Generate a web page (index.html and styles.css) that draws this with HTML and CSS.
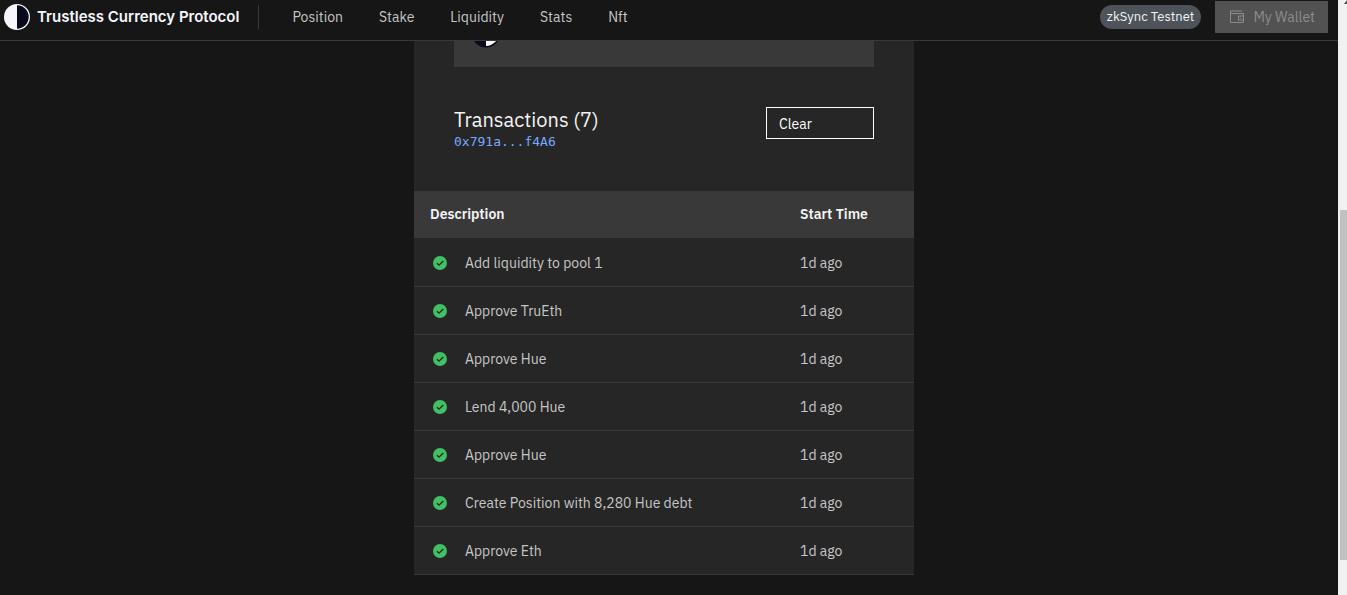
FILE: index.html
```
<!DOCTYPE html>
<html lang="en">
<head>
<meta charset="utf-8">
<title>Trustless Currency Protocol</title>
<link rel="stylesheet" href="styles.css">
</head>
<body>
<svg class="defs" aria-hidden="true">
  <symbol id="check" viewBox="0 0 16 16">
    <circle cx="8" cy="8" r="7" fill="#42be65"/>
    <path d="M4.9 8.2 7 10.2l4.2-4.2" fill="none" stroke="#262626" stroke-width="1.3"/>
  </symbol>
</svg>
<div class="app">
  <header class="header">
    <a class="brand" href="#">
      <svg class="brand-mark" viewBox="0 0 26 26" aria-hidden="true">
        <circle cx="13" cy="13" r="13" fill="#f5f6fc"/>
        <path d="M13 1.3a11.7 11.7 0 0 1 0 23.4z" fill="#080a1a"/>
      </svg>
      <span>Trustless Currency Protocol</span>
    </a>
    <nav class="nav">
      <a href="#">Position</a>
      <a href="#">Stake</a>
      <a href="#">Liquidity</a>
      <a href="#">Stats</a>
      <a href="#">Nft</a>
    </nav>
    <div class="actions">
      <span class="tag">zkSync Testnet</span>
      <button class="wallet" type="button" disabled>
        <svg class="wallet-icon" viewBox="0 0 32 32" aria-hidden="true" fill="currentColor">
          <path d="M22 17h2v2h-2z"/>
          <path d="M28 8H4V5h22V3H4a2 2 0 0 0-2 2v21a2 2 0 0 0 2 2h24a2 2 0 0 0 2-2V10a2 2 0 0 0-2-2zM4 26V10h24v3h-8a2 2 0 0 0-2 2v6a2 2 0 0 0 2 2h8v3zm24-11v6h-8v-6z"/>
        </svg>
        <span>My Wallet</span>
      </button>
    </div>
  </header>
  <main class="main">
    <section class="panel">
      <div class="token">
        <svg class="token-mark" viewBox="0 0 28 7" aria-hidden="true">
          <circle cx="14" cy="-7.5" r="14" fill="#080a1a"/>
          <path d="M14-20a12.5 12.5 0 0 1 0 25z" fill="#fff"/>
        </svg>
      </div>
      <div class="title-row">
        <div>
          <h1>Transactions (7)</h1>
          <a class="address" href="#">0x791a...f4A6</a>
        </div>
        <button class="clear" type="button">Clear</button>
      </div>
      <table class="list">
        <thead>
          <tr><th colspan="2">Description</th><th class="time">Start Time</th></tr>
        </thead>
        <tbody>
          <tr><td class="state"><svg><use href="#check"/></svg></td><td>Add liquidity to pool 1</td><td class="time">1d ago</td></tr>
          <tr><td class="state"><svg><use href="#check"/></svg></td><td>Approve TruEth</td><td class="time">1d ago</td></tr>
          <tr><td class="state"><svg><use href="#check"/></svg></td><td>Approve Hue</td><td class="time">1d ago</td></tr>
          <tr><td class="state"><svg><use href="#check"/></svg></td><td>Lend 4,000 Hue</td><td class="time">1d ago</td></tr>
          <tr><td class="state"><svg><use href="#check"/></svg></td><td>Approve Hue</td><td class="time">1d ago</td></tr>
          <tr><td class="state"><svg><use href="#check"/></svg></td><td>Create Position with 8,280 Hue debt</td><td class="time">1d ago</td></tr>
          <tr><td class="state"><svg><use href="#check"/></svg></td><td>Approve Eth</td><td class="time">1d ago</td></tr>
        </tbody>
      </table>
    </section>
  </main>
</div>
<div class="scroll" aria-hidden="true">
  <svg class="scroll-arrow" viewBox="0 0 3 4"><path d="M3 0v4H0z" fill="#505050"/></svg>
  <div class="thumb"></div>
</div>
</body>
</html>
```
FILE: styles.css
```
* { box-sizing: border-box; }

body {
  margin: 0;
  height: 100vh;
  display: flex;
  overflow: hidden;
  background: #161616;
  color: #c6c6c6;
  font: 14px/18px "IBM Plex Sans", "Noto Sans", sans-serif;
}

a { color: inherit; text-decoration: none; }
button { font: inherit; margin: 0; border-radius: 0; }
.defs { position: absolute; width: 0; height: 0; }
.app { flex: 1; min-width: 0; }

.header {
  display: flex;
  align-items: flex-start;
  border-bottom: 1px solid #393939;
  height: 41px;
}
.brand {
  display: flex;
  align-items: center;
  gap: 7px;
  height: 34px;
  padding-left: 4px;
  color: #f5f6fc;
  font: 600 15px/20px Inter, sans-serif;
  white-space: nowrap;
}
.brand-mark { width: 26px; height: 26px; }
.nav {
  display: flex;
  align-items: center;
  gap: 36px;
  height: 24px;
  margin: 5px 0 0 19px;
  padding-left: 33px;
  border-left: 1px solid #393939;
}
.actions {
  display: flex;
  align-items: center;
  gap: 14px;
  margin-left: auto;
  padding: 1px 10px 0 0;
}
.tag {
  padding: 3px 7px;
  border-radius: 12px;
  background: #4d5358;
  color: #f2f4f8;
  font-size: 13px;
  white-space: nowrap;
}
.wallet {
  display: flex;
  align-items: center;
  gap: 8px;
  height: 32px;
  padding: 0 13px 0 14px;
  border: 0;
  background: #525252;
  color: #8d8d8d;
}
.wallet-icon { width: 16px; height: 16px; }

.main { padding-right: 10px; }
.panel {
  width: 500px;
  max-width: 100%;
  margin: 0 auto;
  background: #262626;
}
.token {
  height: 26px;
  margin: 0 40px;
  padding-left: 18px;
  background: #393939;
}
.token-mark { display: block; width: 28px; height: 7px; }
.title-row {
  display: flex;
  justify-content: space-between;
  align-items: flex-start;
  padding: 40px 40px 41px;
}
h1 {
  margin: 0;
  color: #f4f4f4;
  font-size: 20px;
  font-weight: 400;
  line-height: 26px;
}
.address {
  display: block;
  color: #78a9ff;
  font: 13px/17px "DejaVu Sans Mono", monospace;
}
.clear {
  width: 108px;
  height: 32px;
  padding: 1px 12px 0;
  border: 1px solid #fff;
  background: transparent;
  color: #fff;
  text-align: left;
}

.list { width: 100%; border-collapse: separate; border-spacing: 0; text-align: left; }
th {
  height: 48px;
  padding: 0 16px 2px;
  border-bottom: 1px solid #262626;
  background: #393939;
  color: #f4f4f4;
  font-weight: 600;
}
td {
  height: 48px;
  padding: 1px 0 0;
  border-bottom: 1px solid #393939;
}
.state { width: 51px; padding-left: 18px; }
.state svg { display: block; width: 16px; height: 16px; }
.time { width: 128px; padding-left: 14px; }

.scroll { width: 9px; padding-left: 2px; background: #f1f1f1; }
.scroll-arrow { display: block; width: 3px; height: 4px; margin-left: 4px; }
.thumb { height: 350px; margin-top: 206px; background: #c1c1c1; }
```
